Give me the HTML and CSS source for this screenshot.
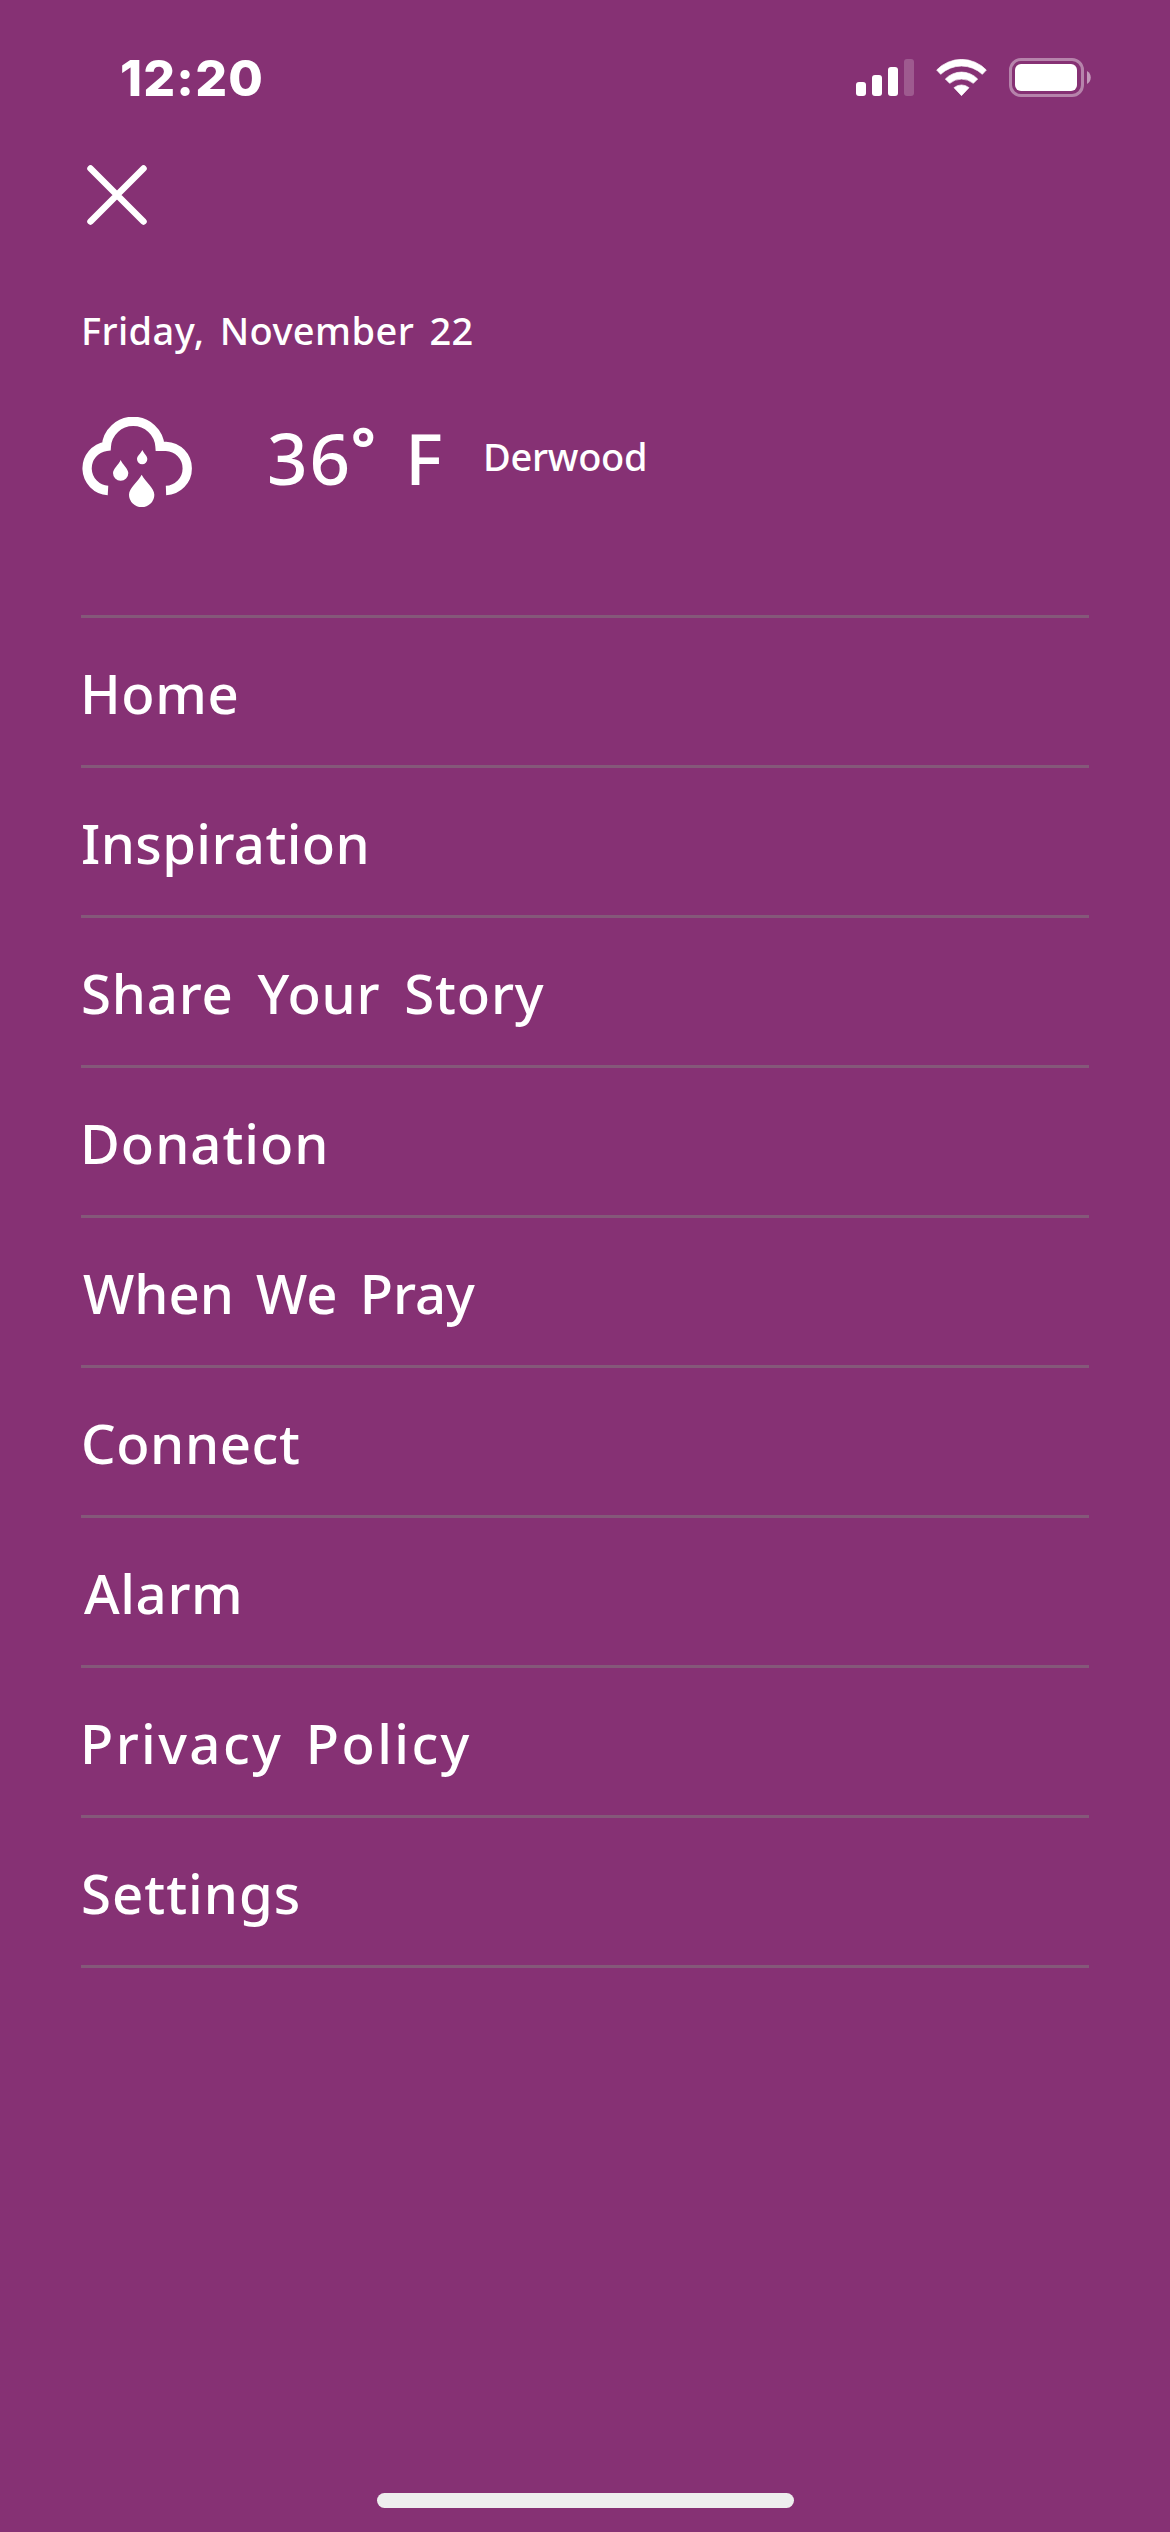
FILE: index.html
```html
<!DOCTYPE html>
<html lang="en">
<head>
<meta charset="utf-8">
<title>Menu</title>
<link rel="stylesheet" href="styles.css">
</head>
<body>
<div class="screen">
  <header class="status">
    <span class="time">12:20</span>
    <div class="indicators">
      <svg class="signal" viewBox="0 0 58 37" fill="#fff">
        <rect x="0" y="23" width="10" height="14" rx="3"/>
        <rect x="16" y="16" width="10" height="21" rx="3"/>
        <rect x="32" y="8" width="10" height="29" rx="3"/>
        <rect x="48" y="0" width="10" height="37" rx="3" opacity=".2"/>
      </svg>
      <svg class="wifi" viewBox="318 57 153 111" fill="#fff" stroke="#fff" stroke-width="2" stroke-linejoin="round">
        <path d="M320 90A103 103 0 0 1 469 90L457 103A91 91 0 0 0 332 103Z"/>
        <path d="M346 117A67 67 0 0 1 443 117L430 130A56 56 0 0 0 359 130Z"/>
        <path d="M372 143A35 35 0 0 1 417 143L394.5 167Z"/>
      </svg>
      <svg class="battery" viewBox="0 0 82 39">
        <rect x="1.5" y="1.5" width="72" height="36" rx="10.5" fill="none" stroke="#fff" stroke-width="3" opacity=".4"/>
        <rect x="6" y="6" width="62" height="27" rx="6" fill="#fff"/>
        <path d="M78 13C83 15.500 83 23.500 78 26Z" fill="#fff" opacity=".5"/>
      </svg>
    </div>
  </header>
  <main class="content">
    <svg class="close" viewBox="0 0 60 60" stroke="#fff" stroke-width="6.5" stroke-linecap="round">
      <path d="M3.500 3.500L56.500 56.500M56.500 3.500L3.500 56.500"/>
    </svg>
    <p class="date">Friday, November 22</p>
    <section class="weather">
      <svg class="cloud" viewBox="63 51 336 270" fill="#fff">
        <path d="M144 271.500A66.600 66.600 0 0 1 139 139A80.700 80.700 0 0 1 300 139H318A66.300 66.300 0 0 1 318 271.500" fill="none" stroke="#fff" stroke-width="28"/>
        <path d="M247 150C252 161 262 168 262 177A15.500 15.500 0 0 1 231 177C231 168 242 161 247 150Z"/>
        <path d="M182 180C188 194 205 207 205 219A23 23 0 0 1 159 219C159 207 176 194 182 180Z"/>
        <path d="M245 224C255 243 283 265 283 284A38 37 0 0 1 207 284C207 265 235 243 245 224Z"/>
      </svg>
      <p class="temp"><span class="value">36</span><span class="degree">°</span><span class="unit">F</span></p>
      <p class="city">Derwood</p>
    </section>
    <nav class="menu">
      <a class="item home">Home</a>
      <a class="item inspiration">Inspiration</a>
      <a class="item story">Share Your Story</a>
      <a class="item donation">Donation</a>
      <a class="item pray">When We Pray</a>
      <a class="item connect">Connect</a>
      <a class="item alarm">Alarm</a>
      <a class="item privacy">Privacy Policy</a>
      <a class="item settings">Settings</a>
    </nav>
  </main>
  <div class="home-bar"></div>
</div>
</body>
</html>
```
FILE: styles.css
```css
* { box-sizing: border-box; }
body { margin: 0; background: #863174; }
p { margin: 0; }
svg { display: block; }

.screen {
  display: flex;
  flex-direction: column;
  width: 1170px;
  height: 2532px;
  padding-bottom: 24px;
  background: #863174;
  color: #fff;
  font-family: "Noto Sans", sans-serif;
  font-weight: 500;
  white-space: nowrap;
}

.status {
  display: flex;
  justify-content: space-between;
  align-items: center;
  height: 155px;
  padding: 0 79px 0 120px;
}
.time {
  font: 800 50px/60px Inter, sans-serif;
  letter-spacing: 1.2px;
}
.indicators { display: flex; align-items: center; gap: 22px; }
.signal { width: 58px; height: 37px; }
.wifi { width: 51px; height: 37px; }
.battery { width: 82px; height: 39px; }

.content { padding: 10px 81px 0; }
.close { width: 60px; height: 60px; margin-left: 6px; }
.date {
  margin: 75px 0 0;
  font-size: 38px;
  line-height: 60px;
  letter-spacing: .4px;
  word-spacing: 5px;
}

.weather {
  display: flex;
  align-items: flex-start;
  height: 90px;
  margin-top: 57px;
}
.cloud { width: 112px; height: 90px; }
.temp {
  display: flex;
  margin-left: 74px;
  font-size: 71px;
  line-height: 82px;
}
.value { width: 84px; letter-spacing: 2px; }
.degree { width: 54px; font-size: 58px; font-weight: 700; line-height: 60px; }
.unit { width: 38px; }
.city { margin-left: 40px; font-size: 38px; line-height: 78px; letter-spacing: -.3px; }

.menu {
  display: flex;
  flex-direction: column;
  margin-top: 108px;
  border-top: 3px solid #845879;
}
.item {
  height: 150px;
  padding-top: 3px;
  border-bottom: 3px solid #845879;
  font-size: 54.5px;
  line-height: 145px;
}
.home { text-indent: -1px; letter-spacing: .6px; }
.inspiration { letter-spacing: .4px; }
.story { letter-spacing: .8px; word-spacing: 9px; }
.donation { text-indent: -1px; letter-spacing: 1px; }
.pray { text-indent: 2px; word-spacing: 8px; }
.connect { letter-spacing: .6px; }
.alarm { text-indent: 3px; letter-spacing: .6px; }
.privacy { text-indent: -1px; letter-spacing: 2.4px; word-spacing: 6px; }
.settings { letter-spacing: 1px; }

.home-bar {
  width: 417px;
  height: 15px;
  margin: auto auto 0;
  border-radius: 8px;
  background: #eee;
}
```
